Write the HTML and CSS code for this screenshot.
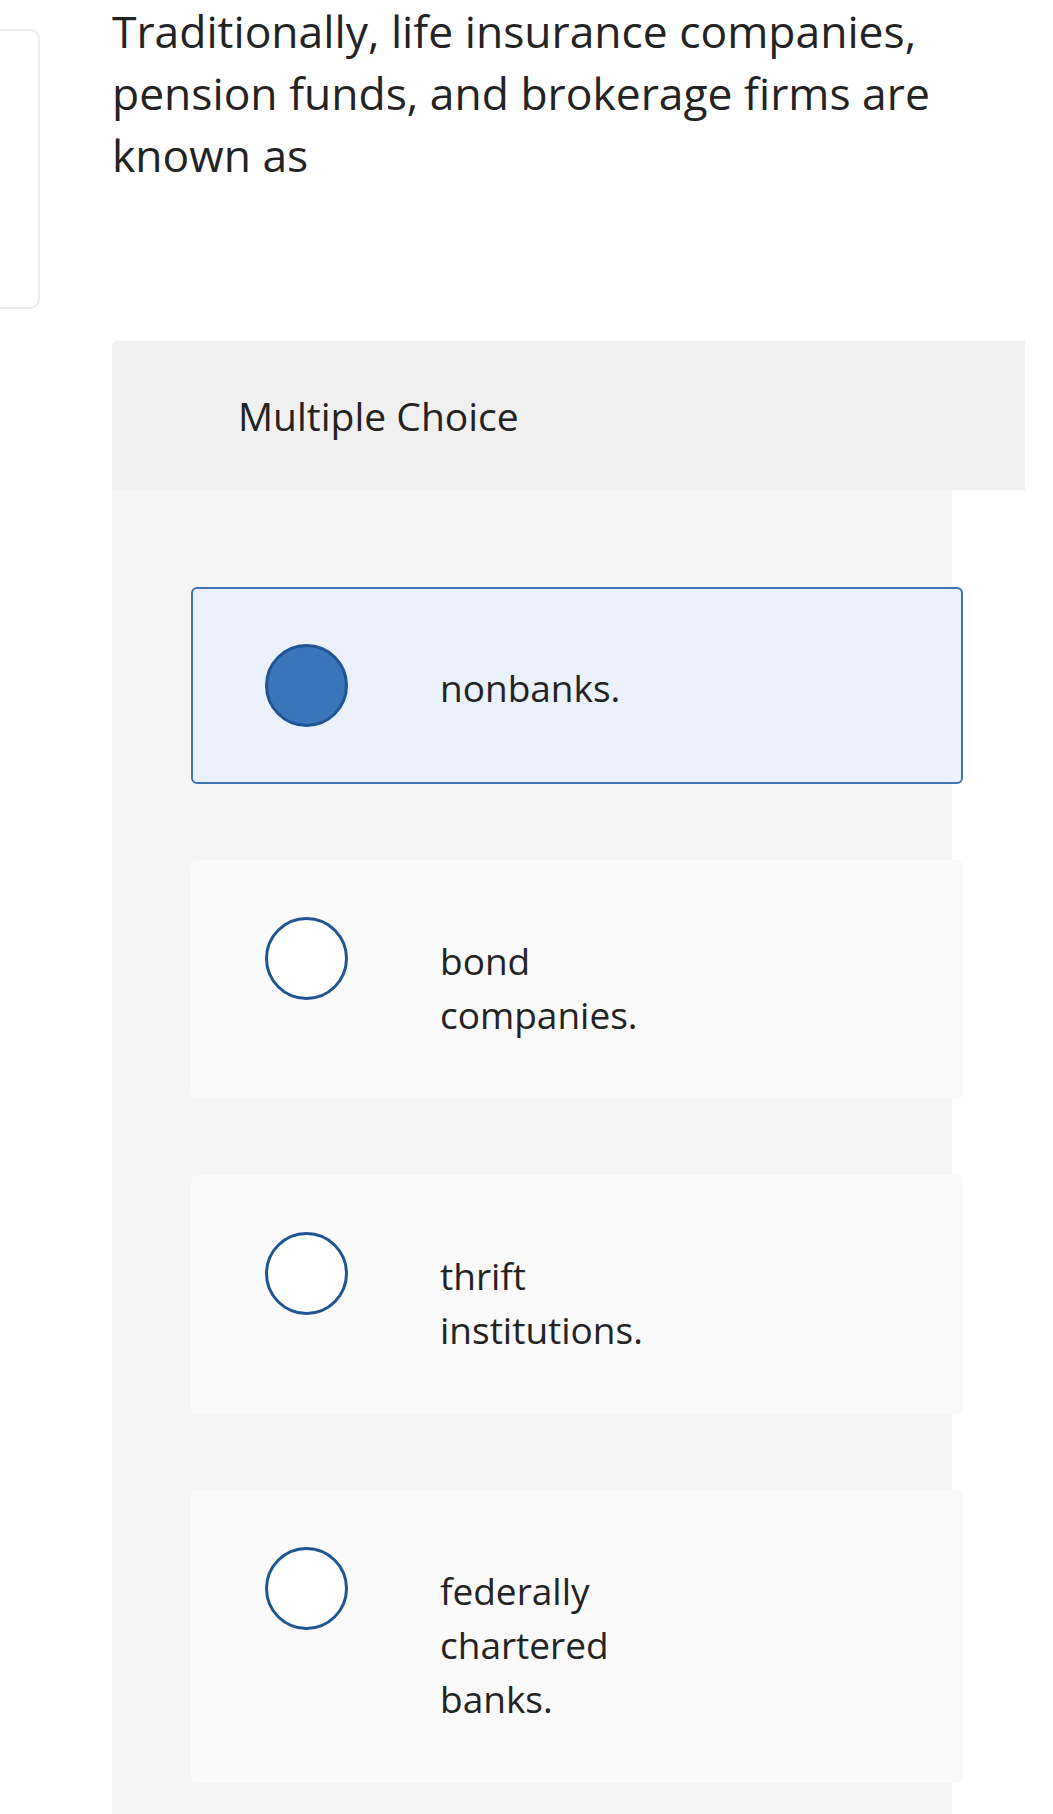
FILE: index.html
```html
<!DOCTYPE html>
<html lang="en">
<head>
<meta charset="utf-8">
<title>Multiple Choice</title>
<link rel="stylesheet" href="styles.css">
</head>
<body>
<div class="layout">
  <aside class="side-card"></aside>
  <main class="main">
    <p class="question">Traditionally, life insurance companies, pension funds, and brokerage firms are known as</p>
    <section class="mc">
      <header class="mc-head">Multiple Choice</header>
      <div class="mc-body">
        <div class="choice selected">
          <span class="radio checked"></span>
          <span class="choice-text">nonbanks.</span>
        </div>
        <div class="choice">
          <span class="radio"></span>
          <span class="choice-text">bond companies.</span>
        </div>
        <div class="choice">
          <span class="radio"></span>
          <span class="choice-text">thrift institutions.</span>
        </div>
        <div class="choice">
          <span class="radio"></span>
          <span class="choice-text">federally chartered banks.</span>
        </div>
      </div>
    </section>
  </main>
</div>
</body>
</html>
```
FILE: styles.css
```css
html, body {
  margin: 0;
  padding: 0;
  background: #ffffff;
}
body {
  font-family: "Open Sans", "Noto Sans", sans-serif;
  color: #232323;
  overflow: hidden;
}
.layout {
  display: flex;
  align-items: flex-start;
  gap: 72px;
}
.side-card {
  flex: none;
  width: 58px;
  height: 280px;
  margin-left: -18px;
  margin-top: 29px;
  border: 2px solid #ececec;
  border-radius: 10px;
  box-sizing: border-box;
}
.main {
  width: 913px;
  flex: none;
}
.question {
  margin: 0;
  font-size: 44.4px;
  line-height: 62px;
  width: 880px;
}
.mc {
  margin-top: 155px;
}
.mc-head {
  height: 149px;
  display: flex;
  align-items: center;
  padding-left: 126px;
  background: #f0f0f0;
  border-top-left-radius: 6px;
  font-size: 39px;
}
.mc-body {
  width: 840px;
  box-sizing: border-box;
  background: #f5f5f5;
  padding: 97px 0 76px 79px;
  display: flex;
  flex-direction: column;
  gap: 76px;
}
.choice {
  width: 772px;
  flex: none;
  box-sizing: border-box;
  display: flex;
  align-items: flex-start;
  padding: 55px 0 55px 72px;
  background: #fafafa;
  border: 2px solid transparent;
  border-radius: 6px;
}
.choice.selected {
  background: #eaf1fa;
  border-color: #3a73b6;
}
.radio {
  flex: none;
  width: 83px;
  height: 83px;
  box-sizing: border-box;
  border-radius: 50%;
  border: 3px solid #1e5592;
  background: #ffffff;
}
.radio.checked {
  background: #3a76b9;
}
.choice-text {
  margin-left: 92px;
  margin-top: 17px;
  width: 240px;
  font-size: 37px;
  line-height: 54px;
}
```
